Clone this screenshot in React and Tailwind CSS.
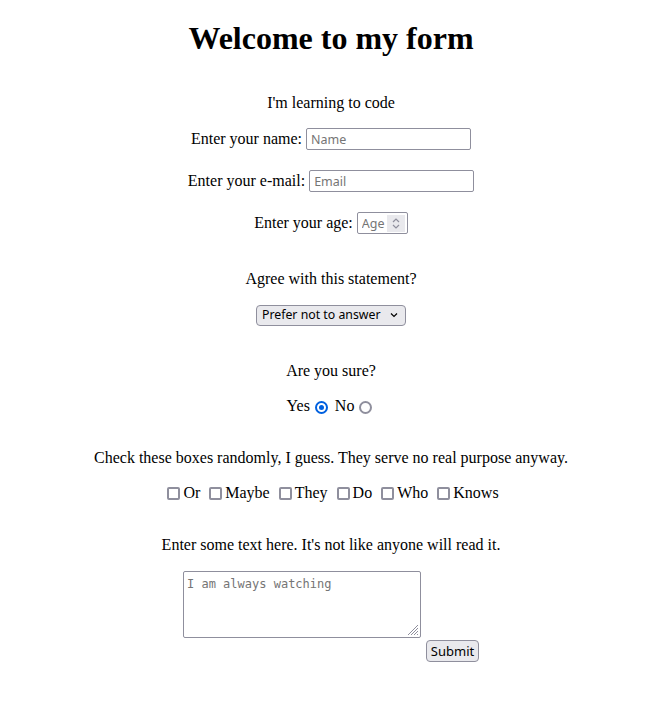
import React from "react";

const Radio = ({ checked }) => (
  <span
    className={
      "inline-flex items-center justify-center w-[13px] h-[13px] rounded-full border-2 bg-white " +
      (checked ? "border-[#0060df]" : "border-[#8f8f9d]")
    }
  >
    {checked && <span className="w-[5px] h-[5px] rounded-full bg-[#0060df]" />}
  </span>
);

const Box = () => (
  <span className="inline-block w-[13px] h-[13px] rounded-[2px] border-2 border-[#8f8f9d] bg-white" />
);

const App = () => {
  const boxes = ["Or", "Maybe", "They", "Do", "Who", "Knows"];

  return (
    <div className="min-h-screen bg-white text-black font-['Liberation_Serif',serif] text-[16px] pl-[14px]">
      <form className="flex flex-col items-center" onSubmit={(e) => e.preventDefault()}>
        <h1 className="mt-[20px] h-[37px] leading-[37px] text-[32px] font-bold">Welcome to my form</h1>

        <p className="mt-[35px] h-[22px] leading-[22px]">I'm learning to code</p>

        <div className="mt-[14px] h-[22px] flex items-center">
          <label className="mr-[4px]">Enter your name:</label>
          <input
            type="text"
            placeholder="Name"
            className="w-[165px] h-[22px] px-[4px] border border-[#8f8f9d] rounded-[2px] font-['Noto_Sans',sans-serif] text-[12.5px] placeholder:text-[#757575] outline-none"
          />
        </div>

        <div className="mt-[20px] h-[22px] flex items-center">
          <label className="mr-[4px]">Enter your e-mail:</label>
          <input
            type="email"
            placeholder="Email"
            className="w-[165px] h-[22px] px-[4px] border border-[#8f8f9d] rounded-[2px] font-['Noto_Sans',sans-serif] text-[12.5px] placeholder:text-[#757575] outline-none"
          />
        </div>

        <div className="mt-[20px] h-[22px] flex items-center">
          <label className="mr-[4px]">Enter your age:</label>
          <div className="w-[51px] h-[22px] flex items-center border border-[#8f8f9d] rounded-[2px] pl-[4px] pr-[2px]">
            <input
              type="text"
              placeholder="Age"
              className="w-[24px] h-full font-['Noto_Sans',sans-serif] text-[12.5px] placeholder:text-[#757575] outline-none"
            />
            <span className="ml-auto w-[18px] h-[17px] bg-[#e9e9ed] flex items-center justify-center">
              <svg width="10" height="13" viewBox="0 0 10 13" fill="none" stroke="#8f8f9d" strokeWidth="1.2">
                <path d="M2 5 L5 2 L8 5" />
                <path d="M2 8 L5 11 L8 8" />
              </svg>
            </span>
          </div>
        </div>

        <p className="mt-[34px] h-[22px] leading-[22px]">Agree with this statement?</p>

        <div className="mt-[14px] h-[22px] flex items-center">
          <div className="w-[150px] h-[21px] flex items-center justify-between pl-[5px] pr-[7px] bg-[#e9e9ed] border border-[#8f8f9d] rounded-[4px] font-['Noto_Sans',sans-serif] text-[12.3px]">
            <span>Prefer not to answer</span>
            <svg width="8" height="6" viewBox="0 0 8 6" fill="none" stroke="#000" strokeWidth="1.2">
              <path d="M1 1.5 L4 4.5 L7 1.5" />
            </svg>
          </div>
        </div>

        <p className="mt-[34px] h-[22px] leading-[22px]">Are you sure?</p>

        <div className="mt-[13px] h-[22px] flex items-center">
          <span>Yes</span>
          <span className="ml-[5px] mr-[3px] mt-[2px] flex"><Radio checked /></span>
          <span className="ml-[4px]">No</span>
          <span className="ml-[5px] mr-[3px] mt-[2px] flex"><Radio /></span>
        </div>

        <p className="mt-[30px] h-[22px] leading-[22px]">
          Check these boxes randomly, I guess. They serve no real purpose anyway.
        </p>

        <div className="mt-[13px] h-[22px] flex items-center">
          {boxes.map((b, i) => (
            <span key={b} className={"flex items-center " + (i > 0 ? "ml-[5px]" : "")}>
              <span className="ml-[4px] mr-[3px] flex"><Box /></span>
              <span>{b}</span>
            </span>
          ))}
        </div>

        <p className="mt-[30px] h-[22px] leading-[22px]">Enter some text here. It's not like anyone will read it.</p>

        <div className="mt-[15px] flex items-start">
          <div className="relative w-[238px] h-[67px]">
            <textarea
              placeholder="I am always watching"
              className="w-full h-full resize-none px-[3px] py-[4px] border border-[#8f8f9d] rounded-[2px] font-['DejaVu_Sans_Mono',monospace] text-[12px] leading-[16px] placeholder:text-[#757575] outline-none"
            />
            <svg
              className="absolute right-[2px] bottom-[2px]"
              width="12"
              height="12"
              viewBox="0 0 12 12"
              stroke="#8f8f9d"
              strokeWidth="1"
            >
              <path d="M11 1 L1 11 M11 4 L4 11 M11 7 L7 11 M11 10 L10 11" />
            </svg>
          </div>
          <button
            type="submit"
            className="ml-[5px] mt-[69px] w-[53px] h-[22px] bg-[#e9e9ed] border border-[#8f8f9d] rounded-[4px] font-['Noto_Sans',sans-serif] text-[13px] leading-none text-black"
          >
            Submit
          </button>
        </div>
      </form>
    </div>
  );
};

export default App;
